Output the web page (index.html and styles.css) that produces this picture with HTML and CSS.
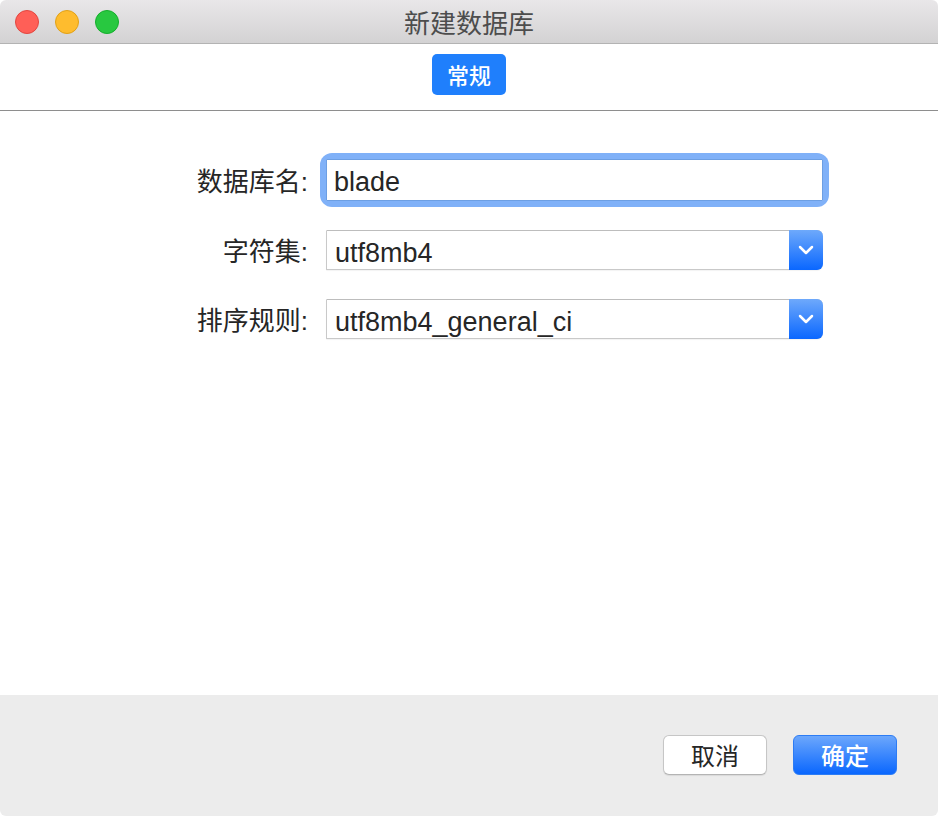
FILE: index.html
```html
<!DOCTYPE html>
<html lang="zh-CN">
<head>
    <meta charset="UTF-8">
    <meta name="viewport" content="width=device-width, initial-scale=1.0">
    <title>新建数据库</title>
    <link rel="stylesheet" href="styles.css">
</head>
<body>
    <div class="window">
        <div class="titlebar">
            <div class="traffic-lights">
                <span class="light close"></span>
                <span class="light minimize"></span>
                <span class="light zoom"></span>
            </div>
            <div class="window-title">新建数据库</div>
        </div>

        <div class="tab-bar">
            <button class="tab active">常规</button>
        </div>

        <div class="content">
            <div class="form-grid">
                <label class="form-label" for="db-name">数据库名:</label>
                <div class="field-focus">
                    <input class="text-input" id="db-name" type="text" value="blade">
                </div>

                <label class="form-label">字符集:</label>
                <div class="select">
                    <span class="select-value">utf8mb4</span>
                    <span class="select-arrow">
                        <svg width="16" height="10" viewBox="0 0 16 10"><path d="M2 2 L8 8 L14 2" fill="none" stroke="#fff" stroke-width="2.5" stroke-linecap="round" stroke-linejoin="round"/></svg>
                    </span>
                </div>

                <label class="form-label">排序规则:</label>
                <div class="select">
                    <span class="select-value">utf8mb4_general_ci</span>
                    <span class="select-arrow">
                        <svg width="16" height="10" viewBox="0 0 16 10"><path d="M2 2 L8 8 L14 2" fill="none" stroke="#fff" stroke-width="2.5" stroke-linecap="round" stroke-linejoin="round"/></svg>
                    </span>
                </div>
            </div>
        </div>

        <div class="footer">
            <button class="btn btn-cancel">取消</button>
            <button class="btn btn-primary">确定</button>
        </div>
    </div>
</body>
</html>
```

FILE: styles.css
```css
body {
    margin: 0;
    padding: 0;
    background-color: #fff;
    font-family: "Liberation Sans", "Noto Sans CJK SC", sans-serif;
}

.window {
    width: 938px;
    height: 816px;
    display: flex;
    flex-direction: column;
    border-radius: 6px;
    overflow: hidden;
    background: #fff;
}

/* title bar */
.titlebar {
    height: 43px;
    border-bottom: 1px solid #b3b3b3;
    background: linear-gradient(to bottom, #e9e7e9, #d3d2d3);
    display: flex;
    align-items: center;
    justify-content: center;
    position: relative;
}

.traffic-lights {
    position: absolute;
    left: 15px;
    top: 10px;
    display: flex;
    gap: 16px;
}

.light {
    width: 22px;
    height: 22px;
    border-radius: 50%;
    border: 1px solid transparent;
}

.light.close {
    background: #ff5f57;
    border-color: #e2463f;
}

.light.minimize {
    background: #febc2e;
    border-color: #e1a116;
}

.light.zoom {
    background: #28c840;
    border-color: #14ae2b;
}

.window-title {
    font-family: "Noto Sans CJK SC", sans-serif;
    font-size: 26px;
    color: #4d4d4d;
    line-height: 1;
}

/* tab bar */
.tab-bar {
    height: 67px;
    box-sizing: border-box;
    border-bottom: 1px solid #8e8e8e;
    display: flex;
    justify-content: center;
    align-items: flex-start;
    padding-top: 10px;
}

.tab {
    width: 74px;
    height: 41px;
    border: none;
    border-radius: 5px;
    background: #1f7ffc;
    color: #fff;
    font-family: "Noto Sans CJK SC", sans-serif;
    font-size: 22px;
    font-weight: 500;
    padding: 0;
    line-height: 41px;
}

/* form */
.content {
    flex: 1;
    padding-top: 48px;
}

.form-grid {
    display: grid;
    grid-template-columns: 308px 497px;
    column-gap: 18px;
    row-gap: 29px;
    align-items: center;
}

.form-label {
    text-align: right;
    font-size: 26px;
    color: #262626;
    line-height: 1;
    padding-top: 3px;
}

.field-focus {
    border-radius: 6px;
    box-shadow: 0 0 0 6px #80b1f8;
}

.text-input {
    display: block;
    width: 100%;
    height: 42px;
    box-sizing: border-box;
    border: 1px solid #6d9fe3;
    border-radius: 1px;
    padding: 4px 7px 0;
    font-family: "Liberation Sans", sans-serif;
    font-size: 27px;
    color: #262626;
    outline: none;
    background: #fff;
}

.select {
    height: 40px;
    box-sizing: border-box;
    display: flex;
    border: 1px solid #c9c9c9;
    border-top-color: #bdbdbd;
    border-right: none;
    border-radius: 1px 6px 6px 1px;
    background: #fff;
    box-shadow: 0 1px 1px rgba(0, 0, 0, 0.05);
}

.select-value {
    flex: 1;
    padding-left: 8px;
    padding-top: 4px;
    font-size: 27px;
    color: #262626;
    line-height: 36px;
}

.select-arrow {
    width: 34px;
    margin: -1px 0;
    border-radius: 0 6px 6px 0;
    background: linear-gradient(to bottom, #6ea9fb, #0a67ff);
    display: flex;
    align-items: center;
    justify-content: center;
}

.select-arrow svg {
    display: block;
}

/* footer */
.footer {
    background: #ececec;
    display: flex;
    justify-content: flex-end;
    gap: 26px;
    padding: 40px 41px 41px 0;
}

.btn {
    width: 104px;
    height: 40px;
    border-radius: 6px;
    font-family: "Noto Sans CJK SC", sans-serif;
    font-size: 24px;
    padding: 0;
    line-height: 38px;
}

.btn-cancel {
    background: #fff;
    border: 1px solid #c6c6c6;
    border-bottom-color: #b4b4b4;
    color: #262626;
    box-shadow: 0 1px 1px rgba(0, 0, 0, 0.08);
}

.btn-primary {
    background: linear-gradient(to bottom, #6ca7fc, #0a67fe);
    border: 1px solid #2d7cf4;
    color: #fff;
    font-weight: 500;
}
```
